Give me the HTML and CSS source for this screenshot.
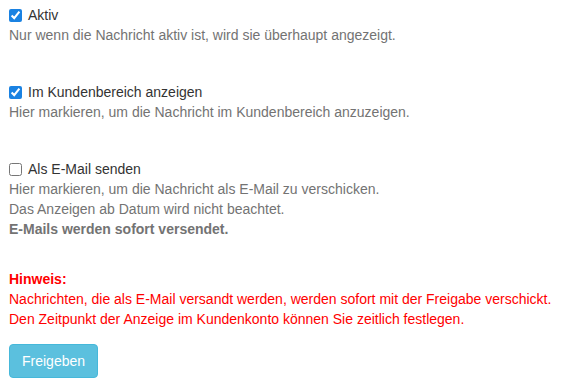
FILE: index.html
```html
<!DOCTYPE html>
<html lang="de">
<head>
<meta charset="utf-8">
<title>Nachricht</title>
<link rel="stylesheet" href="styles.css">
</head>
<body>
<form class="form">
  <div class="group">
    <label class="check"><input type="checkbox" checked> Aktiv</label>
    <p class="help">Nur wenn die Nachricht aktiv ist, wird sie überhaupt angezeigt.</p>
  </div>
  <div class="group">
    <label class="check"><input type="checkbox" checked> Im Kundenbereich anzeigen</label>
    <p class="help">Hier markieren, um die Nachricht im Kundenbereich anzuzeigen.</p>
  </div>
  <div class="group group-last">
    <label class="check"><input type="checkbox"> Als E-Mail senden</label>
    <p class="help">Hier markieren, um die Nachricht als E-Mail zu verschicken.<br>Das Anzeigen ab Datum wird nicht beachtet.<br><strong>E-Mails werden sofort versendet.</strong></p>
  </div>
  <div class="notice">
    <strong>Hinweis:</strong><br>
    Nachrichten, die als E-Mail versandt werden, werden sofort mit der Freigabe verschickt.<br>
    Den Zeitpunkt der Anzeige im Kundenkonto können Sie zeitlich festlegen.
  </div>
  <button type="button" class="btn">Freigeben</button>
</form>
</body>
</html>
```
FILE: styles.css
```css
html, body {
  margin: 0;
  padding: 0;
  background: #fff;
}
body {
  font-family: "Liberation Sans", Arial, sans-serif;
  font-size: 14px;
  line-height: 20px;
  color: #333;
}
.form {
  padding: 5px 9px 0 9px;
}
.group {
  margin-bottom: 37px;
}
.group-last {
  margin-bottom: 30px;
}
.check {
  display: block;
  position: relative;
  padding-left: 19px;
  cursor: pointer;
}
.check input {
  position: absolute;
  left: 0;
  top: 4px;
  margin: 0;
  width: 13px;
  height: 13px;
  accent-color: #1a82e2;
}
.help {
  margin: 0;
  color: #737373;
}
.help strong {
  font-weight: bold;
}
.notice {
  color: #ff0000;
  margin-bottom: 15px;
}
.btn {
  display: block;
  font-family: inherit;
  font-size: 14px;
  line-height: 20px;
  padding: 6px 12px;
  color: #fff;
  background: #5bc0de;
  border: 1px solid #46b8da;
  border-radius: 4px;
  cursor: pointer;
}
```
